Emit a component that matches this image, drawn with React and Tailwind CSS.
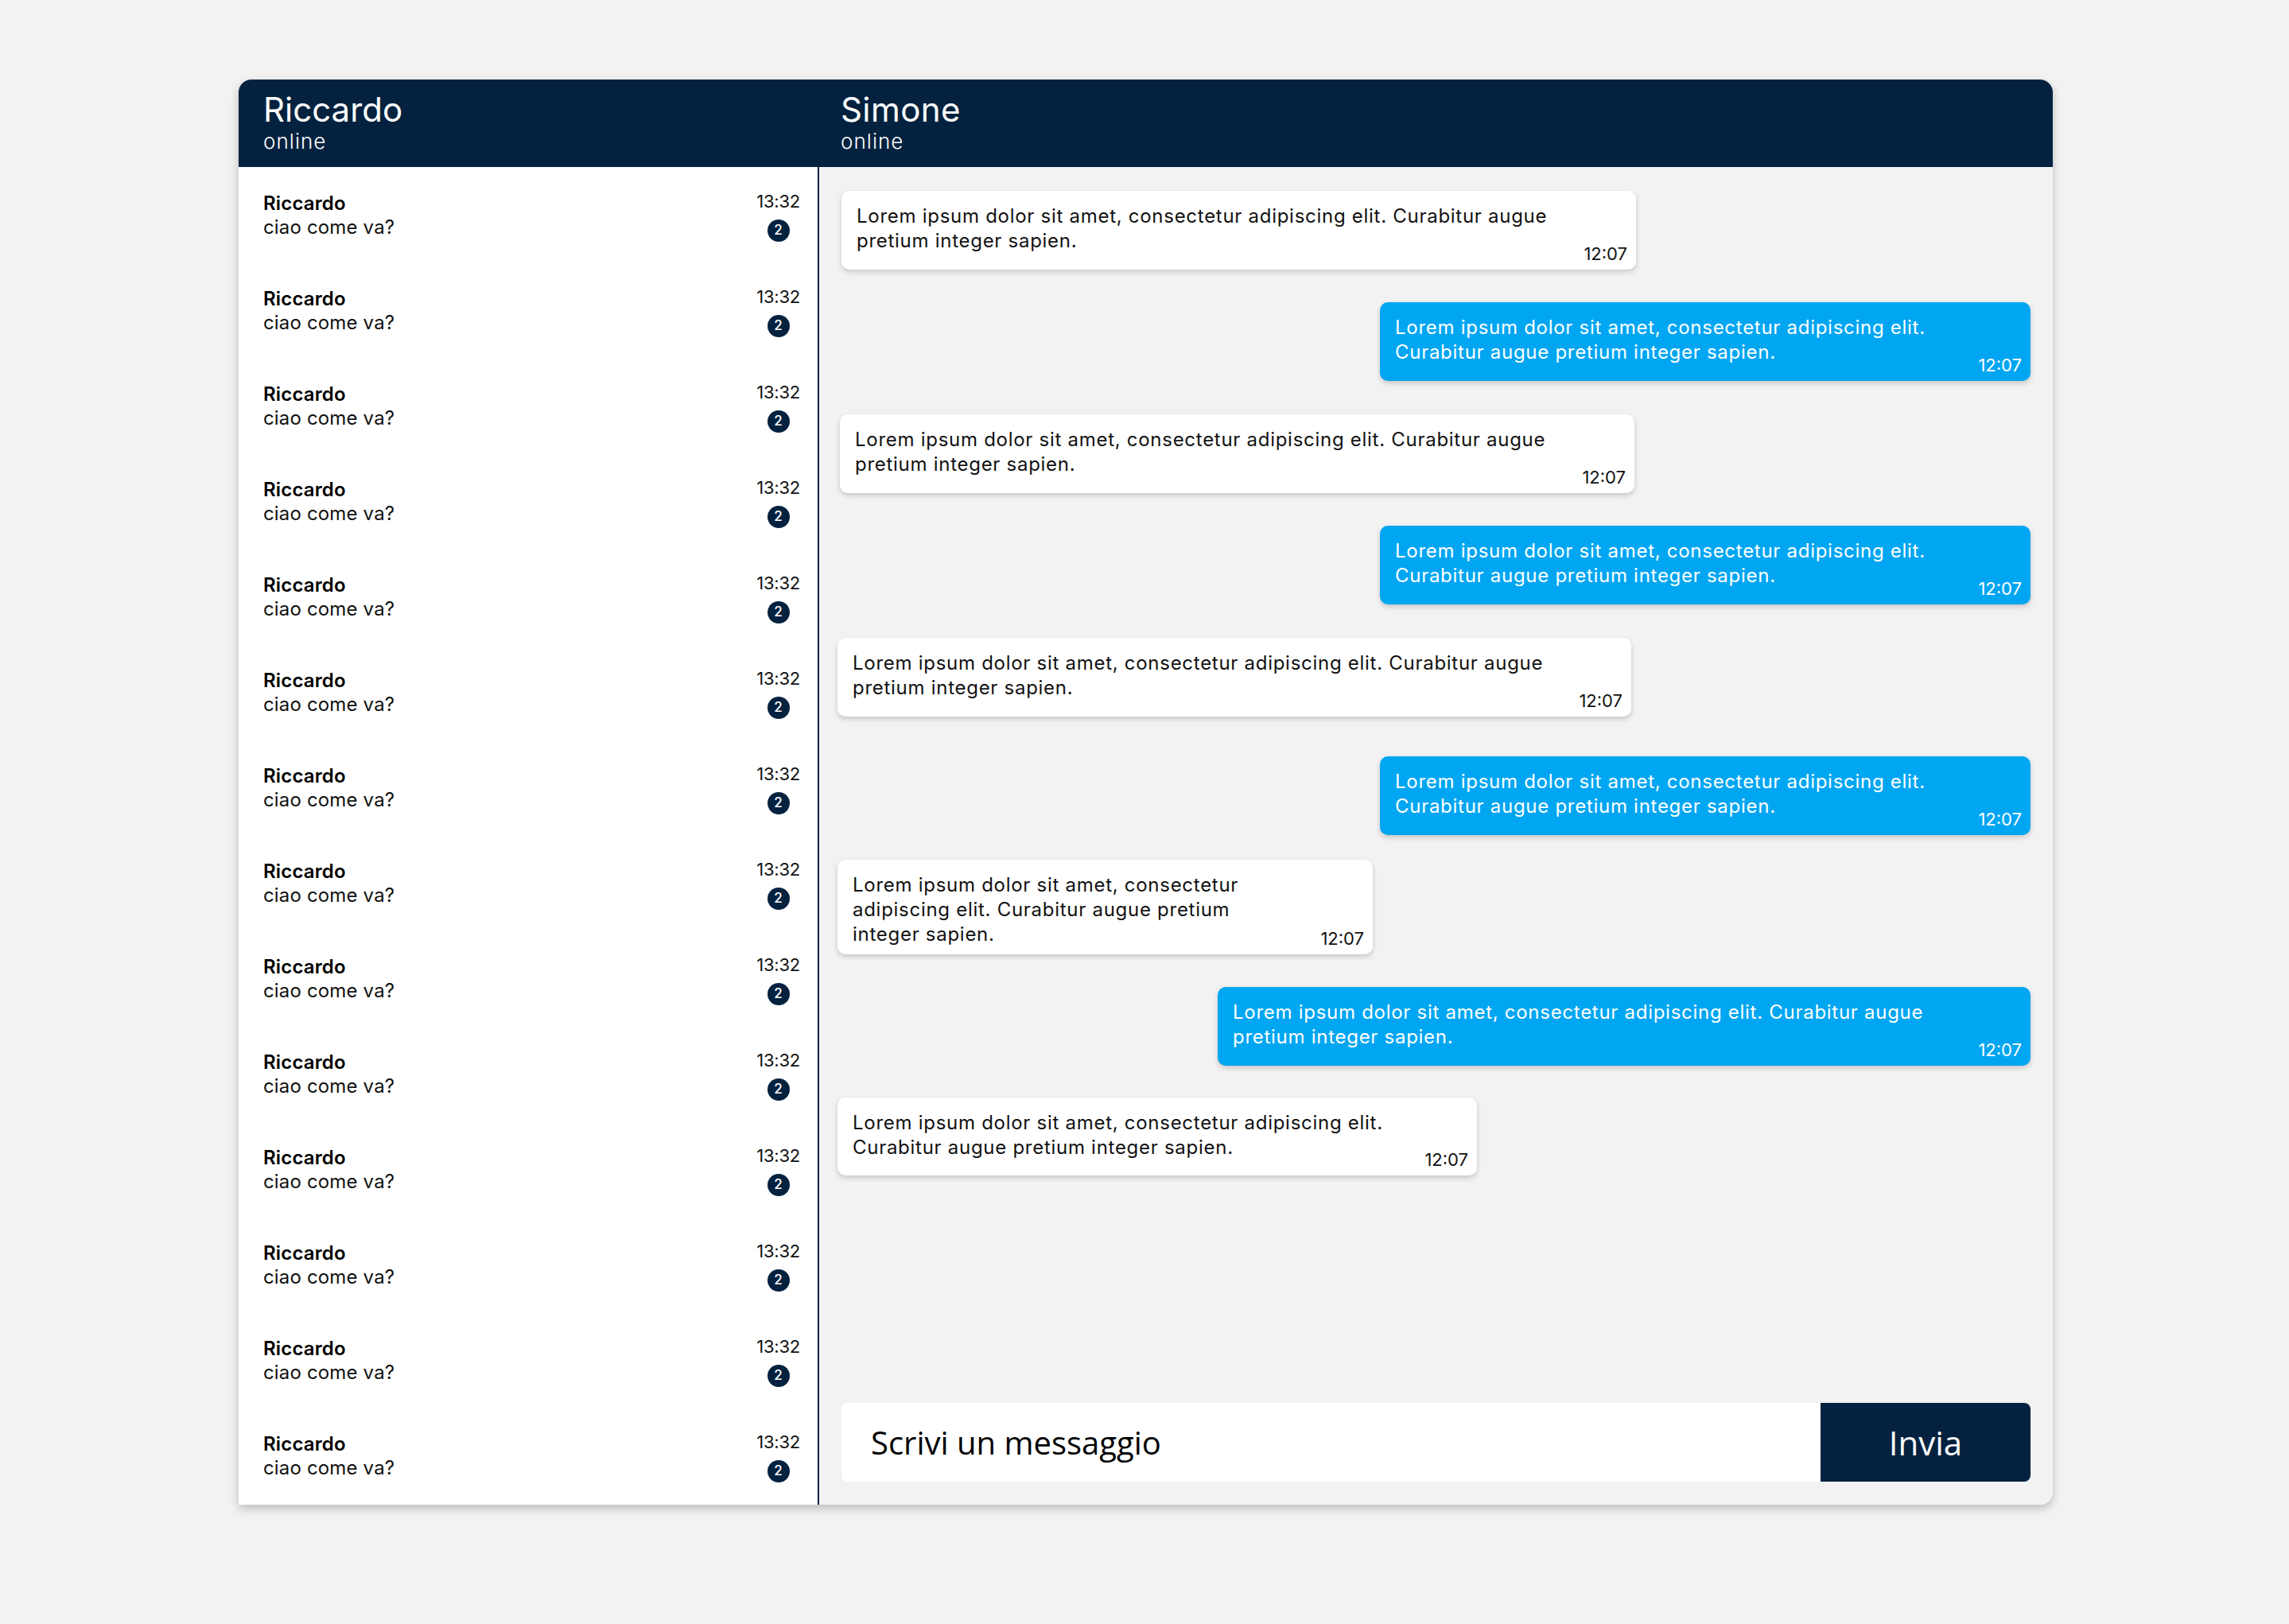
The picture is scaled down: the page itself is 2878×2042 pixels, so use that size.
import React from 'react'

const navy = 'bg-[#04223f]'

const messages = [
  { me: false, w: 'w-[999px]', mt: 'mt-0', ml: 'ml-0', pb: 'pb-[21px]', lines: ['Lorem ipsum dolor sit amet, consectetur adipiscing elit. Curabitur augue', 'pretium integer sapien.'] },
  { me: true, w: 'w-[818px]', mt: 'mt-[41px]', ml: 'ml-0', pb: 'pb-[21px]', lines: ['Lorem ipsum dolor sit amet, consectetur adipiscing elit.', 'Curabitur augue pretium integer sapien.'] },
  { me: false, w: 'w-[999px]', mt: 'mt-[42px]', ml: '-ml-[2px]', pb: 'pb-[21px]', lines: ['Lorem ipsum dolor sit amet, consectetur adipiscing elit. Curabitur augue', 'pretium integer sapien.'] },
  { me: true, w: 'w-[818px]', mt: 'mt-[41px]', ml: 'ml-0', pb: 'pb-[21px]', lines: ['Lorem ipsum dolor sit amet, consectetur adipiscing elit.', 'Curabitur augue pretium integer sapien.'] },
  { me: false, w: 'w-[998px]', mt: 'mt-[42px]', ml: '-ml-[5px]', pb: 'pb-[21px]', lines: ['Lorem ipsum dolor sit amet, consectetur adipiscing elit. Curabitur augue', 'pretium integer sapien.'] },
  { me: true, w: 'w-[818px]', mt: 'mt-[50px]', ml: 'ml-0', pb: 'pb-[21px]', lines: ['Lorem ipsum dolor sit amet, consectetur adipiscing elit.', 'Curabitur augue pretium integer sapien.'] },
  { me: false, w: 'w-[673px]', mt: 'mt-[31px]', ml: '-ml-[5px]', pb: 'pb-[10px]', lines: ['Lorem ipsum dolor sit amet, consectetur', 'adipiscing elit. Curabitur augue pretium', 'integer sapien.'] },
  { me: true, w: 'w-[1022px]', mt: 'mt-[41px]', ml: 'ml-0', pb: 'pb-[21px]', lines: ['Lorem ipsum dolor sit amet, consectetur adipiscing elit. Curabitur augue', 'pretium integer sapien.'] },
  { me: false, w: 'w-[804px]', mt: 'mt-[40px]', ml: '-ml-[5px]', pb: 'pb-[20px]', lines: ['Lorem ipsum dolor sit amet, consectetur adipiscing elit.', 'Curabitur augue pretium integer sapien.'] },
]

function ChatItem() {
  return (
    <div className="flex h-[120px] shrink-0 justify-between pl-[31px] pr-[22px] pt-[31px]">
      <div className="flex flex-col tracking-[0.01em]">
        <span className="text-[24px] font-semibold leading-[30px] text-black">Riccardo</span>
        <span className="text-[24px] leading-[30px] text-[#111]">ciao come va?</span>
      </div>
      <div className="-mt-[2px] flex flex-col items-center">
        <span className="text-[22px] leading-[28px] tracking-[-0.01em] text-[#111]">13:32</span>
        <span className={`mt-[9px] flex h-[28px] w-[28px] items-center justify-center rounded-full ${navy} text-[17px] font-medium text-white`}>2</span>
      </div>
    </div>
  )
}

function Bubble({ m }) {
  return (
    <div
      className={`relative ${m.w} ${m.mt} ${m.ml} ${m.pb} shrink-0 rounded-[10px] px-[19px] pt-[16px] shadow-[0_3px_6px_rgba(0,0,0,0.18)] ${
        m.me ? 'self-end bg-[#00a6f2] text-white' : 'self-start bg-white text-[#111]'
      }`}
    >
      {m.lines.map((l, i) => (
        <div key={i} className="text-[24px] leading-[31px] tracking-[0.03em] whitespace-nowrap">{l}</div>
      ))}
      <span className="absolute bottom-[7px] right-[11px] text-[22px] leading-[26px]">12:07</span>
    </div>
  )
}

export default function App() {
  return (
    <div className="min-h-screen w-full bg-[#f2f2f2] pt-[100px] pl-[300px]" style={{ fontFamily: 'Inter, "Noto Sans", sans-serif' }}>
      <div className="flex h-[1792px] w-[2281px] flex-col overflow-hidden rounded-t-[16px] rounded-br-[16px] bg-white shadow-[0_5px_12px_rgba(0,0,0,0.22)]">
        <div className={`flex h-[110px] shrink-0 ${navy} text-white`}>
          <div className="flex w-[730px] flex-col pl-[31px] pt-[14px]">
            <span className="text-[42px] leading-[48px]">Riccardo</span>
            <span className="text-[26px] font-light leading-[32px] tracking-[0.04em]">online</span>
          </div>
          <div className="flex flex-col pl-[27px] pt-[14px]">
            <span className="text-[42px] leading-[48px] tracking-[0.01em]">Simone</span>
            <span className="text-[26px] font-light leading-[32px] tracking-[0.04em]">online</span>
          </div>
        </div>
        <div className="flex min-h-0 flex-1">
          <div className="flex w-[730px] shrink-0 flex-col border-r-2 border-[#04223f] bg-white">
            {Array.from({ length: 14 }).map((_, i) => (
              <ChatItem key={i} />
            ))}
          </div>
          <div className="flex flex-1 flex-col bg-[#f2f2f2] px-[28px] pt-[30px] pb-[29px]">
            {messages.map((m, i) => (
              <Bubble key={i} m={m} />
            ))}
            <div className="mt-auto flex h-[99px] shrink-0">
              <input
                className="h-full flex-1 rounded-l-[8px] bg-white pl-[37px] text-[40px] text-black outline-none placeholder:text-black"
                style={{ fontFamily: '"Open Sans", sans-serif' }}
                placeholder="Scrivi un messaggio"
              />
              <button
                className={`h-full w-[264px] rounded-r-[8px] ${navy} text-[42px] text-white`}
                style={{ fontFamily: '"Open Sans", sans-serif' }}
              >
                Invia
              </button>
            </div>
          </div>
        </div>
      </div>
    </div>
  )
}
